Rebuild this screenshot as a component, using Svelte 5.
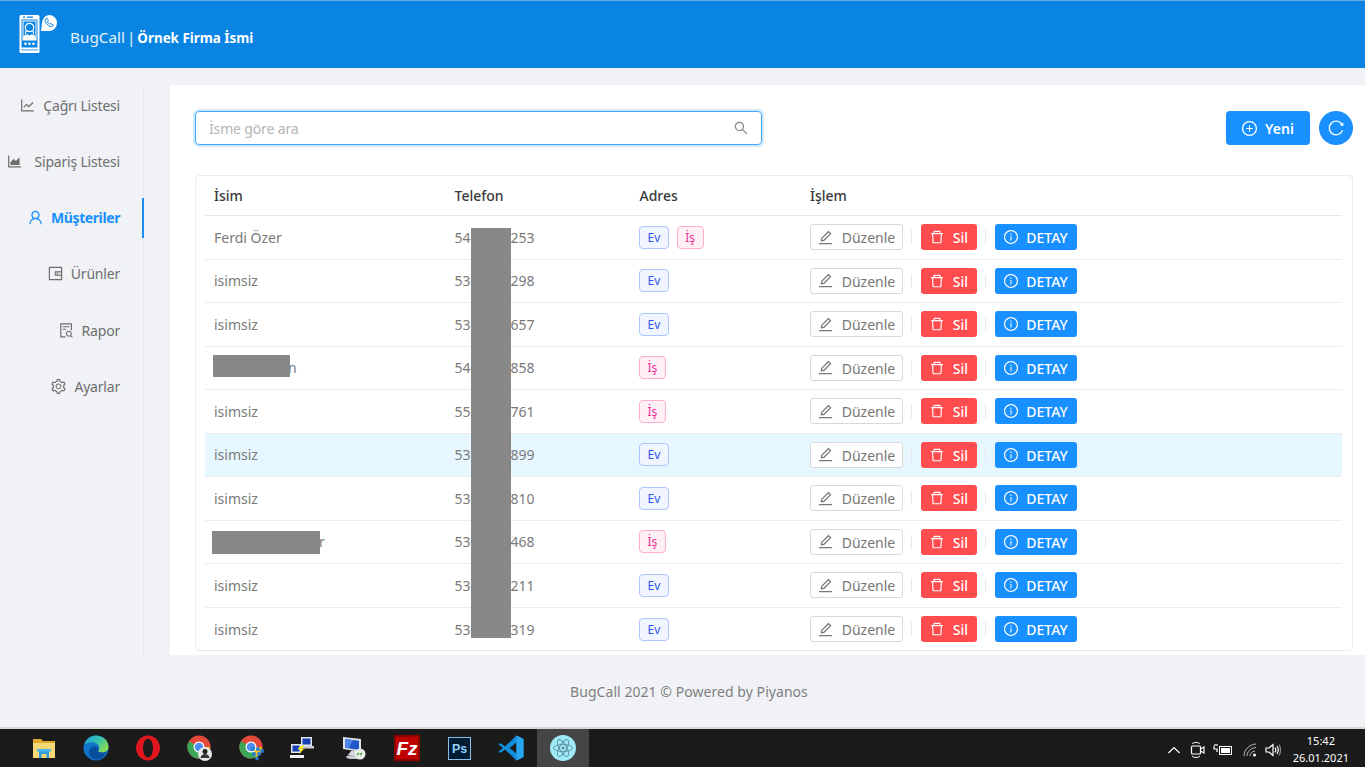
<script>
  const icons = {
    lineChart: "M888 792H200V168c0-4.4-3.6-8-8-8h-56c-4.4 0-8 3.6-8 8v688c0 4.4 3.6 8 8 8h752c4.4 0 8-3.6 8-8v-56c0-4.4-3.6-8-8-8zM305.8 637.7c3.1 3.1 8.1 3.1 11.3 0l138.3-137.6L583 628.5c3.1 3.1 8.2 3.1 11.3 0l275.4-275.3c3.1-3.1 3.1-8.2 0-11.3l-39.6-39.6a8.03 8.03 0 00-11.3 0l-230 229.9L461.4 404a8.03 8.03 0 00-11.3 0L266.3 586.7a8.03 8.03 0 000 11.3l39.5 39.7z",
    areaChart: "M888 792H200V168c0-4.4-3.6-8-8-8h-56c-4.4 0-8 3.6-8 8v688c0 4.4 3.6 8 8 8h752c4.4 0 8-3.6 8-8v-56c0-4.4-3.6-8-8-8zm-616-64h536c4.4 0 8-3.6 8-8V284c0-7.2-8.7-10.7-13.8-5.7L592 488.6l-125.4-124a8.03 8.03 0 00-11.3 0l-189 189.6a7.87 7.87 0 00-2.3 5.6V720c0 4.4 3.6 8 8 8z",
    user: "M858.5 763.6a374 374 0 00-80.6-119.5 375.63 375.63 0 00-119.5-80.6c-.4-.2-.8-.3-1.2-.5C719.5 518 760 444.7 760 362c0-137-111-248-248-248S264 225 264 362c0 82.7 40.5 156 102.8 201.1-.4.2-.8.3-1.2.5-44.8 18.9-85 46-119.5 80.6a375.63 375.63 0 00-80.6 119.5A371.7 371.7 0 00136 901.8a8 8 0 008 8.2h60c4.4 0 7.9-3.5 8-7.8 2-77.2 33-149.5 87.8-204.3 56.7-56.7 132-87.9 212.2-87.9s155.5 31.2 212.2 87.9C779 752.7 810 825 812 902.2c.1 4.4 3.6 7.8 8 7.8h60a8 8 0 008-8.2c-1-47.8-10.9-94.3-29.5-138.2zM512 534c-45.9 0-89.1-17.9-121.6-50.4S340 407.9 340 362c0-45.9 17.9-89.1 50.4-121.6S466.1 190 512 190s89.1 17.9 121.6 50.4S684 316.1 684 362c0 45.9-17.9 89.1-50.4 121.6S557.9 534 512 534z",
    wallet: "M880 112H144c-17.7 0-32 14.3-32 32v736c0 17.7 14.3 32 32 32h736c17.7 0 32-14.3 32-32V144c0-17.7-14.3-32-32-32zm-40 464H528V448h312v128zm0 264H184V184h656v200H496c-17.7 0-32 14.3-32 32v192c0 17.7 14.3 32 32 32h344v200zM580 512a40 40 0 1080 0 40 40 0 10-80 0z",
    fileSearch: "M688 312v-48c0-4.4-3.6-8-8-8H296c-4.4 0-8 3.6-8 8v48c0 4.4 3.6 8 8 8h384c4.4 0 8-3.6 8-8zm-392 88c-4.4 0-8 3.6-8 8v48c0 4.4 3.6 8 8 8h184c4.4 0 8-3.6 8-8v-48c0-4.4-3.6-8-8-8H296zm144 452H208V148h560v344c0 4.4 3.6 8 8 8h56c4.4 0 8-3.6 8-8V108c0-17.7-14.3-32-32-32H168c-17.7 0-32 14.3-32 32v784c0 17.7 14.3 32 32 32h272c4.4 0 8-3.6 8-8v-56c0-4.4-3.6-8-8-8zm445.7 51.5l-93.3-93.3C814.7 780.7 828 743.9 828 704c0-97.2-78.8-176-176-176s-176 78.8-176 176 78.8 176 176 176c35.8 0 69-10.7 96.8-29l94.7 94.7c1.6 1.6 3.6 2.3 5.6 2.3s4.1-.8 5.6-2.3l31-31a7.9 7.9 0 000-11.2zM652 816c-61.9 0-112-50.1-112-112s50.1-112 112-112 112 50.1 112 112-50.1 112-112 112z",
    setting: "M924.8 625.7l-65.5-56c3.1-19 4.7-38.4 4.7-57.8s-1.6-38.8-4.7-57.8l65.5-56a32.03 32.03 0 009.3-35.2l-.9-2.6a443.74 443.74 0 00-79.7-137.9l-1.8-2.1a32.12 32.12 0 00-35.1-9.5l-81.3 28.9c-30-24.6-63.5-44-99.7-57.6l-15.7-85a32.05 32.05 0 00-25.8-25.7l-2.7-.5c-52.1-9.4-106.9-9.4-159 0l-2.7.5a32.05 32.05 0 00-25.8 25.7l-15.8 85.4a351.86 351.86 0 00-99 57.4l-81.9-29.1a32 32 0 00-35.1 9.5l-1.8 2.1a446.02 446.02 0 00-79.7 137.9l-.9 2.6c-4.5 12.5-.8 26.5 9.3 35.2l66.3 56.6c-3.1 18.8-4.6 38-4.6 57.1 0 19.2 1.5 38.4 4.6 57.1L99 625.5a32.03 32.03 0 00-9.3 35.2l.9 2.6c18.1 50.4 44.9 96.9 79.7 137.9l1.8 2.1a32.12 32.12 0 0035.1 9.5l81.9-29.1c29.8 24.5 63.1 43.9 99 57.4l15.8 85.4a32.05 32.05 0 0025.8 25.7l2.7.5a449.4 449.4 0 00159 0l2.7-.5a32.05 32.05 0 0025.8-25.7l15.7-85a350 350 0 0099.7-57.6l81.3 28.9a32 32 0 0035.1-9.5l1.8-2.1c34.8-41.1 61.6-87.5 79.7-137.9l.9-2.6c4.5-12.3.8-26.3-9.3-35zM788.3 465.9c2.5 15.1 3.8 30.6 3.8 46.1s-1.3 31-3.8 46.1l-6.6 40.1 74.7 63.9a370.03 370.03 0 01-42.6 73.6L721 702.8l-31.4 25.8c-23.9 19.6-50.5 35-79.3 45.8l-38.1 14.3-17.9 97a377.5 377.5 0 01-85 0l-17.9-97.2-37.8-14.5c-28.5-10.8-55-26.2-78.7-45.7l-31.4-25.9-93.4 33.2c-17-22.9-31.2-47.6-42.6-73.6l75.5-64.5-6.5-40c-2.4-14.9-3.7-30.3-3.7-45.5 0-15.3 1.2-30.6 3.7-45.5l6.5-40-75.5-64.5c11.3-26.1 25.6-50.7 42.6-73.6l93.4 33.2 31.4-25.9c23.7-19.5 50.2-34.9 78.7-45.7l37.9-14.3 17.9-97.2c28.1-3.2 56.8-3.2 85 0l17.9 97 38.1 14.3c28.7 10.8 55.4 26.2 79.3 45.8l31.4 25.8 92.8-32.9c17 22.9 31.2 47.6 42.6 73.6L781.8 426l6.5 39.9zM512 326c-97.2 0-176 78.8-176 176s78.8 176 176 176 176-78.8 176-176-78.8-176-176-176zm79.2 255.2A111.6 111.6 0 01512 614c-29.9 0-58-11.7-79.2-32.8A111.6 111.6 0 01400 502c0-29.9 11.7-58 32.8-79.2C454 401.6 482.1 390 512 390c29.9 0 58 11.6 79.2 32.8A111.6 111.6 0 01624 502c0 29.9-11.7 58-32.8 79.2z",
    edit: "M257.7 752c2 0 4-.2 6-.5L431.9 722c2-.4 3.9-1.3 5.3-2.8l423.9-423.9a9.96 9.96 0 000-14.1L694.9 114.9c-1.9-1.9-4.4-2.9-7.1-2.9s-5.2 1-7.1 2.9L256.8 538.8c-1.5 1.5-2.4 3.3-2.8 5.3l-29.5 168.2a33.5 33.5 0 009.4 29.8c6.6 6.4 14.9 9.9 23.8 9.9zm67.4-174.4L687.8 215l73.3 73.3-362.7 362.6-88.9 15.7 15.6-89zM880 836H144c-17.7 0-32 14.3-32 32v36c0 4.4 3.6 8 8 8h784c4.4 0 8-3.6 8-8v-36c0-17.7-14.3-32-32-32z",
    trash: "M360 184h-8c4.4 0 8-3.6 8-8v8h304v-8c0 4.4 3.6 8 8 8h-8v72h72v-80c0-35.3-28.7-64-64-64H352c-35.3 0-64 28.7-64 64v80h72v-72zm504 72H160c-17.7 0-32 14.3-32 32v32c0 4.4 3.6 8 8 8h60.4l24.7 523c1.6 34.1 29.8 61 63.9 61h454c34.2 0 62.3-26.8 63.9-61l24.7-523H888c4.4 0 8-3.6 8-8v-32c0-17.7-14.3-32-32-32zM731.3 840H292.7l-24.2-512h487l-24.2 512z",
    info: "M512 64C264.6 64 64 264.6 64 512s200.6 448 448 448 448-200.6 448-448S759.4 64 512 64zm0 820c-205.4 0-372-166.6-372-372s166.6-372 372-372 372 166.6 372 372-166.6 372-372 372zM464 336a48 48 0 1096 0 48 48 0 10-96 0zm72 112h-48c-4.4 0-8 3.6-8 8v272c0 4.4 3.6 8 8 8h48c4.4 0 8-3.6 8-8V456c0-4.4-3.6-8-8-8z",
    plus: "M696 480H544V328c0-4.4-3.6-8-8-8h-48c-4.4 0-8 3.6-8 8v152H328c-4.4 0-8 3.6-8 8v48c0 4.4 3.6 8 8 8h152v152c0 4.4 3.6 8 8 8h48c4.4 0 8-3.6 8-8V544h152c4.4 0 8-3.6 8-8v-48c0-4.4-3.6-8-8-8zM512 64C264.6 64 64 264.6 64 512s200.6 448 448 448 448-200.6 448-448S759.4 64 512 64zm0 820c-205.4 0-372-166.6-372-372s166.6-372 372-372 372 166.6 372 372-166.6 372-372 372z",
    reload: "M909.1 209.3l-56.4 44.1C775.8 155.1 656.2 92 521.9 92 290 92 102.3 279.5 102 511.5 101.7 743.7 289.8 932 521.9 932c181.3 0 335.8-115 394.6-276.1 1.5-4.2-.7-8.9-4.9-10.3l-56.7-19.5a8 8 0 00-10.1 4.8c-1.8 5-3.8 10-5.9 14.9-17.3 41-42.1 77.8-73.7 109.4A344.77 344.77 0 01655.9 829c-42.3 17.9-87.4 27-133.8 27-46.5 0-91.5-9.1-133.8-27A341.5 341.5 0 01279 755.2a342.16 342.16 0 01-73.7-109.4c-17.9-42.4-27-87.4-27-133.9s9.1-91.5 27-133.9c17.3-41 42.1-77.8 73.7-109.4 31.6-31.6 68.4-56.4 109.3-73.8 42.3-17.9 87.4-27 133.8-27 46.5 0 91.5 9.1 133.8 27a341.5 341.5 0 01109.3 73.8c9.9 9.9 19.2 20.4 27.8 31.4l-60.2 47a8 8 0 003 14.1l175.6 43c5 1.2 9.9-2.6 9.9-7.7l.8-180.9c-.1-6.6-7.8-10.3-13-6.2z",
    search: "M909.6 854.5L649.9 594.8C690.2 542.7 712 479 712 412c0-80.2-31.3-155.4-87.9-212.1-56.6-56.7-132-87.9-212.1-87.9s-155.5 31.3-212.1 87.9C143.2 256.5 112 331.8 112 412c0 80.1 31.3 155.5 87.9 212.1C256.5 680.8 331.8 712 412 712c67 0 130.6-21.9 182.7-62l259.7 259.6a8.2 8.2 0 0011.6 0l43.6-43.5a8.2 8.2 0 000-11.6zM570.4 570.4C528 612.7 471.8 636 412 636s-116-23.3-158.4-65.6C211.3 528 188 471.8 188 412s23.3-116 65.6-158.4C296 211.3 352.2 188 412 188s116 23.3 158.4 65.6S636 352.2 636 412s-23.3 116-65.6 158.4z"
  };

  const menu = [
    { label: "Çağrı Listesi", icon: "lineChart" },
    { label: "Sipariş Listesi", icon: "areaChart", wide: true },
    { label: "Müşteriler", icon: "user", active: true },
    { label: "Ürünler", icon: "wallet" },
    { label: "Rapor", icon: "fileSearch" },
    { label: "Ayarlar", icon: "setting" }
  ];

  // pad: room taken by a name that is blacked out in the screenshot, only its last letter shows
  const rows = [
    { name: "Ferdi Özer", phone: "5400000253", tags: ["Ev", "İş"] },
    { name: "isimsiz", phone: "5300000298", tags: ["Ev"] },
    { name: "isimsiz", phone: "5300000657", tags: ["Ev"] },
    { name: "n", pad: 74, phone: "5400000858", tags: ["İş"] },
    { name: "isimsiz", phone: "5500000761", tags: ["İş"] },
    { name: "isimsiz", phone: "5300000899", tags: ["Ev"], hover: true },
    { name: "isimsiz", phone: "5300000810", tags: ["Ev"] },
    { name: "r", pad: 105, phone: "5300000468", tags: ["İş"] },
    { name: "isimsiz", phone: "5300000211", tags: ["Ev"] },
    { name: "isimsiz", phone: "5300000319", tags: ["Ev"] }
  ];
</script>

{#snippet icon(name)}
  <svg class="icon" viewBox="64 64 896 896" fill="currentColor" aria-hidden="true"><path d={icons[name]} /></svg>
{/snippet}

{#snippet chromeBase()}
  <circle cx="12" cy="12" r="11.500" fill="#e5493a" />
  <path d="M12 12 L2 18 A11.500 11.500 0 0 1 2 6.200z" fill="#3aa757" />
  <path d="M12 12 L2 18 A11.500 11.500 0 0 0 20 20z" fill="#3aa757" />
  <path d="M12 12 L23 12 A11.500 11.500 0 0 1 17 22z" fill="#f5c518" />
  <circle cx="12" cy="12" r="5.500" fill="#fff" />
  <circle cx="12" cy="12" r="4.300" fill="#4d8ef0" />
{/snippet}

<div class="page">
  <header class="topbar">
    <svg class="logo" viewBox="0 0 40 40" fill="none" aria-hidden="true">
      <rect x="1.500" y="1" width="20" height="38" rx="1.500" fill="#fff" />
      <rect x="3.500" y="5.500" width="16" height="28" fill="#0984e3" />
      <rect x="5" y="2.500" width="2" height="1.300" fill="#0984e3" />
      <rect x="9" y="2.500" width="6" height="1.300" fill="#0984e3" />
      <rect x="5" y="7" width="13" height="19" fill="none" stroke="#fff" />
      <circle cx="11.500" cy="13.500" r="4.200" fill="none" stroke="#fff" stroke-width="1.200" />
      <path d="M7.500 20c-.3-2 .2-3 .9-3.500M15.500 20c.3-2-.2-3-.9-3.500" stroke="#fff" stroke-width="1.200" />
      <path d="M5 26v-2c0-2.500 2.500-3.500 4.500-3.800l2 1.300 2-1.300c2 .3 4.500 1.300 4.500 3.800v2z" fill="#fff" />
      <circle cx="7.500" cy="29.800" r="1.300" fill="#fff" />
      <circle cx="11.500" cy="29.800" r="1.300" fill="#fff" />
      <circle cx="15.500" cy="29.800" r="1.300" fill="#fff" />
      <rect x="3" y="35.500" width="17" height=".8" fill="#0984e3" />
      <path d="M31 1a8 8 0 1 1 0 16h-8l1-8a8 8 0 0 1 7-8z" fill="#fff" />
      <path d="M27.500 5c-1.300 1 .2 4 1.700 5.500 1.500 1.500 4.200 3 5.400 1.700l.5-1.300-2.400-1.500-1 .8c-1-.5-1.900-1.500-2.300-2.600l1-1-1.500-2.500z" fill="none" stroke="#0984e3" />
    </svg>
    <div class="brand">BugCall | <strong>Örnek Firma İsmi</strong></div>
  </header>

  <div class="body">
    <nav class="sidebar">
      {#each menu as item}
        <div class="menu-item" class:active={item.active} class:wide={item.wide}>
          {@render icon(item.icon)}
          <span>{item.label}</span>
        </div>
      {/each}
    </nav>

    <main class="content">
      <div class="toolbar">
        <div class="search">
          <span class="placeholder">İsme göre ara</span>
          {@render icon("search")}
        </div>
        <div class="toolbar-actions">
          <button class="btn-new">{@render icon("plus")}<span>Yeni</span></button>
          <button class="btn-reload" aria-label="Yenile">{@render icon("reload")}</button>
        </div>
      </div>

      <div class="card">
        <div class="row head">
          <div>İsim</div>
          <div>Telefon</div>
          <div>Adres</div>
          <div>İşlem</div>
        </div>
        {#each rows as row}
          <div class="row" class:hover={row.hover}>
            <div class="name" style:padding-left={row.pad ? `${row.pad}px` : null}>{row.name}</div>
            <div class="phone">{row.phone}</div>
            <div class="tags">
              {#each row.tags as tag}
                <span class="tag" class:ev={tag === "Ev"} class:is={tag === "İş"}>{tag}</span>
              {/each}
            </div>
            <div class="actions">
              <button class="btn btn-edit">{@render icon("edit")}<span>Düzenle</span></button>
              <i class="sep"></i>
              <button class="btn btn-del">{@render icon("trash")}<span>Sil</span></button>
              <i class="sep"></i>
              <button class="btn btn-info">{@render icon("info")}<span>DETAY</span></button>
            </div>
          </div>
        {/each}
      </div>

      <!-- redaction blocks painted over the table -->
      <div class="mask mask-phone"></div>
      <div class="mask mask-name1"></div>
      <div class="mask mask-name2"></div>
    </main>
  </div>

  <footer class="footer">BugCall 2021 © Powered by Piyanos</footer>

  <div class="taskbar">
    <div class="apps">
      <div class="app">
        <svg viewBox="0 0 26 26"><path d="M2 4h8l2 2h12v4H2z" fill="#e0a92e" /><path d="M2 8h22v15H2z" fill="#f7d774" /><path d="M8 15h10v8h-2.500v-4h-5v4H8z" fill="#2f9be0" /><path d="M6 14h14v2.500H6z" fill="#4db5ee" /></svg>
      </div>
      <div class="app">
        <svg viewBox="0 0 26 26">
          <defs>
            <linearGradient id="edge-top" x1="0" y1="0" x2="1" y2=".6">
              <stop offset="0" stop-color="#1b9ed8" />
              <stop offset=".55" stop-color="#37c2b0" />
              <stop offset="1" stop-color="#86dc55" />
            </linearGradient>
          </defs>
          <circle cx="13" cy="13" r="12.500" fill="#0f76cc" />
          <path d="M1 10.500C2.500 4.500 7.500.5 13 .5c7 0 12.500 5 12.500 11.500 0 3.500-3 5.500-6 5.500-2.500 0-4.500-.8-4.500-1.800 2-1.700 1.500-5-.5-6.500-4-3-10.500-2.500-13.500 1.300z" fill="url(#edge-top)" />
          <path d="M15 15.700c0 1 2 1.800 4.500 1.800 1.500 0 3-.5 4.200-1.500-1.500 5-6 9-11 8.500-5-.5-7.500-5-6.500-9 1-3.500 5-5.500 8-3.500 1.500 1 2 2.500.8 3.700z" fill="#0a4f9c" />
        </svg>
      </div>
      <div class="app">
        <svg viewBox="0 0 26 26"><ellipse cx="13" cy="13" rx="12" ry="12.500" fill="#e0161f" /><ellipse cx="13" cy="13" rx="5" ry="9.500" fill="#1c1c1c" /></svg>
      </div>
      <div class="app">
        <svg viewBox="0 0 26 26">{@render chromeBase()}<circle cx="18" cy="19" r="7" fill="#e8e8e8" /><circle cx="18" cy="16.500" r="2.500" fill="#222" /><path d="M13.500 23c.5-3 2.500-4 4.500-4s4 1 4.500 4z" fill="#333" /></svg>
      </div>
      <div class="app">
        <svg viewBox="0 0 26 26">{@render chromeBase()}<g fill="#2f7fd6"><circle cx="14" cy="14" r="2" /><circle cx="19" cy="14" r="2" /><circle cx="23" cy="16" r="2" /><circle cx="15" cy="19" r="2" /><circle cx="20" cy="19" r="2" /><circle cx="18" cy="23.500" r="1.800" /></g></svg>
      </div>
      <div class="app">
        <svg viewBox="0 0 26 26"><rect x="11" y="2" width="11" height="9" fill="#dfe6ef" /><rect x="12.500" y="3.500" width="8" height="6" fill="#1b3fb5" /><rect x="9" y="11" width="15" height="2.500" fill="#c9ced6" /><rect x="1" y="9" width="10" height="9" fill="#dfe6ef" /><rect x="2.500" y="10.500" width="7" height="6" fill="#1b3fb5" /><rect x="0" y="20" width="14" height="3" fill="#eef0f3" /><path d="M9 12l5-2-2 4 3-1-6 6 2-5-3 1z" fill="#f8e71c" /></svg>
      </div>
      <div class="app">
        <svg viewBox="0 0 26 26"><path d="M1 2l18 2v13l-18-3z" fill="#dfe4ea" /><path d="M3 4l14 1.700v9.300l-14-2.200z" fill="#1f56c7" /><path d="M3 4l8 1-4 8-4-.5z" fill="#4f86e8" /><path d="M9 16h8v4H6z" fill="#d4d8dd" /><ellipse cx="11" cy="22" rx="7" ry="2" fill="#c7ccd2" /><circle cx="18" cy="19" r="5.500" fill="#e9efe6" /><path d="M15 20l2-2M18 20l2-2" stroke="#3b9b3b" stroke-width="1.300" /></svg>
      </div>
      <div class="app">
        <svg viewBox="0 0 26 26"><rect width="26" height="26" fill="#8f0000" /><rect x="2" y="2" width="22" height="22" fill="#bf0000" /><text x="13" y="20" text-anchor="middle" font-family="Liberation Sans, sans-serif" font-size="19" font-weight="700" font-style="italic" fill="#fff">Fz</text></svg>
      </div>
      <div class="app small">
        <svg viewBox="0 0 24 24"><rect x=".5" y=".5" width="23" height="23" fill="#001d34" stroke="#8ec5f0" /><text x="12" y="17" text-anchor="middle" font-family="Liberation Sans, sans-serif" font-size="13" font-weight="700" fill="#8fd0ff">Ps</text></svg>
      </div>
      <div class="app">
        <svg viewBox="0 0 26 26"><path d="M18.500 0.500L25.500 4v18l-7 3.500L7 14.500 2.500 18 .5 16.500 5 13 .5 9.500 2.500 8 7 11.500z" fill="#0f8fdc" /><path d="M18.500 7.500L11.500 13l7 5.500z" fill="#1c1c1c" /><path d="M18.500 .5L25.500 4v18l-7 3.500z" fill="#2aa6ee" /></svg>
      </div>
      <div class="app current">
        <svg viewBox="0 0 26 26"><circle cx="13" cy="13" r="13" fill="#9feaf9" /><g fill="none" stroke="#5d8f9c" stroke-width=".9"><ellipse cx="13" cy="13" rx="9.500" ry="3.600" /><ellipse cx="13" cy="13" rx="9.500" ry="3.600" transform="rotate(60 13 13)" /><ellipse cx="13" cy="13" rx="9.500" ry="3.600" transform="rotate(120 13 13)" /></g><circle cx="13" cy="13" r="1.500" fill="#5d8f9c" /></svg>
      </div>
    </div>

    <div class="tray">
      <svg width="14" height="14" viewBox="0 0 14 14" fill="none" stroke="#fff" stroke-width="1.200"><path d="M1.500 10L7 4.500 12.500 10" /></svg>
      <svg class="tray-cam" width="16" height="22" viewBox="0 0 16 22" fill="none" stroke="#fff" stroke-width="1.200"><path d="M2 5c1-2 7-2 8 0M2 17c1 2 7 2 8 0" stroke-width="1" /><rect x="1.500" y="7" width="9" height="8" rx="1" /><path d="M10.500 10l3.500-2v6l-3.500-2" /></svg>
      <svg class="tray-bat" width="19" height="14" viewBox="0 0 19 14"><rect x="6.500" y="3.500" width="12" height="8" fill="none" stroke="#fff" /><rect x="8" y="5" width="9" height="5" fill="#fff" /><path d="M1 3v3h3v3M2 1v2M4 1v2" fill="none" stroke="#fff" stroke-width="1.200" /></svg>
      <svg class="tray-wifi" width="16" height="16" viewBox="0 0 16 16" fill="none" stroke="#bbb"><path d="M2 14C2 8 7 2.500 14 2M5 14c0-4 3.500-8 9-8.500M8 14c0-2.500 2-4.500 5-5" /><circle cx="12.500" cy="13" r="1.500" fill="#fff" stroke="none" /></svg>
      <svg class="tray-vol" width="16" height="16" viewBox="0 0 16 16" fill="none" stroke="#fff" stroke-width="1.200"><path d="M1 6h3l4-3.500v11L4 10H1z" /><path d="M10 5.500c1 1.500 1 3.500 0 5M12 4c1.500 2.300 1.500 5.700 0 8" /><path d="M14 2.500c2 3 2 8 0 11" stroke="#888" /></svg>
      <div class="clock"><span>15:42</span><span>26.01.2021</span></div>
    </div>
  </div>
</div>

<style>
  :global(body) {
    margin: 0;
    background: #f0f2f5;
    font-family: "Noto Sans", "Open Sans", sans-serif;
    font-size: 14px;
    overflow: hidden;
  }

  .page {
    height: 767px;
    display: flex;
    flex-direction: column;
    background: #f0f2f5;
  }

  .icon {
    width: 14px;
    height: 14px;
    flex: none;
  }

  /* header */
  .topbar {
    height: 67px;
    flex: none;
    display: flex;
    align-items: center;
    gap: 12px;
    padding-left: 18px;
    background: #0984e3;
    border-top: 1px solid #62aeea;
    color: #fff;
  }

  .logo {
    width: 40px;
    height: 40px;
    margin-bottom: 2px;
  }

  .brand {
    font-size: 15.300px;
    padding-top: 5px;
    color: #e3f1fc;
    word-spacing: -2px;
  }

  .brand strong {
    font-size: 13.400px;
    font-weight: 700;
    color: #fff;
    word-spacing: 0;
  }

  /* sidebar + content */
  .body {
    display: flex;
    height: 570px;
    margin-top: 17px;
    flex: none;
  }

  .sidebar {
    width: 143px;
    flex: none;
    border-right: 1px solid #e6e8eb;
    display: flex;
    flex-direction: column;
    gap: 16.300px;
    margin-right: 26px;
  }

  .menu-item {
    height: 40px;
    display: flex;
    align-items: center;
    justify-content: flex-end;
    gap: 8px;
    padding-right: 23px;
    color: #6e6e6e;
    letter-spacing: -0.2px;
    position: relative;
  }

  .menu-item.wide {
    gap: 13px;
  }

  .menu-item .icon {
    width: 15px;
    height: 15px;
  }

  .menu-item.active {
    color: #1890ff;
    font-weight: 700;
    letter-spacing: -0.4px;
  }

  .menu-item.active::after {
    content: "";
    position: absolute;
    right: -1px;
    top: 0;
    bottom: 0;
    width: 2px;
    background: #1890ff;
  }

  .content {
    flex: 1;
    min-width: 0;
    background: #fff;
    padding: 26px 12px 0 25px;
    position: relative;
  }

  .toolbar {
    display: flex;
    justify-content: space-between;
    height: 34px;
    margin-bottom: 30px;
  }

  .search {
    width: 567px;
    box-sizing: border-box;
    display: flex;
    align-items: center;
    justify-content: space-between;
    padding: 0 13px;
    border: 1px solid #40a9ff;
    border-radius: 4px;
    box-shadow: 0 0 0 2px rgba(24, 144, 255, 0.2);
    color: #8c8c8c;
  }

  .placeholder {
    color: #b5b5b5;
    letter-spacing: -0.15px;
    padding-top: 1px;
  }

  .toolbar-actions {
    display: flex;
    gap: 9px;
  }

  button {
    font: inherit;
    cursor: pointer;
    padding: 0;
  }

  button span {
    padding-top: 1px;
  }

  .btn-new {
    width: 84px;
    height: 34px;
    display: flex;
    align-items: center;
    justify-content: center;
    gap: 8px;
    border: none;
    border-radius: 4px;
    background: #1890ff;
    color: #fff;
    font-weight: 600;
  }

  .btn-new .icon {
    width: 15px;
    height: 15px;
  }

  .btn-reload {
    width: 34px;
    height: 34px;
    display: flex;
    align-items: center;
    justify-content: center;
    border: none;
    border-radius: 50%;
    background: #1890ff;
    color: #fff;
  }

  .btn-reload .icon {
    width: 16px;
    height: 16px;
  }

  /* table */
  .card {
    box-sizing: border-box;
    height: 476px;
    padding: 0 10px 0 9px;
    border: 1px solid #ebebeb;
    border-radius: 4px;
  }

  .row {
    display: grid;
    grid-template-columns: 240.500px 185px 170.500px 1fr;
    align-items: center;
    height: 43.500px;
    box-sizing: border-box;
    padding-left: 9px;
    border-bottom: 1px solid #ececec;
    color: #7a7a7a;
  }

  .row:last-child {
    border-bottom: none;
  }

  .row.head {
    height: 40px;
    color: #3a3a3a;
    font-weight: 500;
    border-bottom: 1px solid #e6e6e6;
  }

  .row.hover {
    background: #e6f7ff;
  }

  .tags {
    display: flex;
    gap: 8px;
    margin-left: -0.500px;
  }

  .tag {
    box-sizing: border-box;
    height: 23px;
    line-height: 21px;
    padding: 0 7.500px;
    border: 1px solid;
    border-radius: 4px;
    font-size: 12px;
  }

  .tag.ev {
    color: #2f54eb;
    background: #f0f5ff;
    border-color: #adc6ff;
  }

  .tag.is {
    color: #eb2f96;
    background: #fff0f6;
    border-color: #ffadd2;
  }

  .actions {
    display: flex;
    align-items: center;
  }

  .sep {
    width: 1px;
    height: 14px;
    margin: 0 9px 0 8px;
    background: #e8e8e8;
  }

  .btn {
    height: 26px;
    box-sizing: border-box;
    display: flex;
    align-items: center;
    justify-content: center;
    border-radius: 3px;
    border: 1px solid transparent;
  }

  .btn-edit {
    width: 93px;
    gap: 9px;
    background: #fff;
    border-color: #d9d9d9;
    color: #777;
  }

  .btn-edit .icon {
    width: 15px;
    height: 15px;
  }

  .btn-del {
    width: 56px;
    gap: 9px;
    background: #ff4d4f;
    color: #fff;
    font-weight: 500;
  }

  .btn-info {
    width: 82px;
    gap: 8px;
    background: #1890ff;
    color: #fff;
    font-weight: 500;
  }

  .mask {
    position: absolute;
    background: #888;
  }

  .mask-phone {
    left: 301px;
    top: 143px;
    width: 40px;
    height: 410px;
  }

  .mask-name1 {
    left: 43px;
    top: 270px;
    width: 77px;
    height: 22px;
  }

  .mask-name2 {
    left: 42px;
    top: 446px;
    width: 108px;
    height: 23px;
  }

  .footer {
    flex: 1;
    display: flex;
    align-items: center;
    justify-content: center;
    padding-left: 13px;
    color: #7f7f7f;
    letter-spacing: 0.05px;
  }

  /* windows taskbar */
  .taskbar {
    height: 38px;
    flex: none;
    display: flex;
    justify-content: space-between;
    background: #1b1b1b;
    border-top: 2px solid #d8d8d8;
    color: #fff;
  }

  .apps {
    display: flex;
    padding-left: 18px;
  }

  .app {
    width: 51.900px;
    display: flex;
    align-items: center;
    justify-content: center;
  }

  .app svg {
    width: 26px;
    height: 26px;
  }

  .app.small svg {
    width: 23px;
    height: 23px;
  }

  .app.current {
    background: #454545;
  }

  .tray {
    display: flex;
    align-items: center;
    padding-right: 16px;
    padding-top: 4px;
  }

  .tray-cam {
    margin-left: 9px;
  }

  .tray-bat {
    margin-left: 7px;
  }

  .tray-wifi {
    margin-left: 10px;
  }

  .tray-vol {
    margin-left: 7px;
  }

  .clock {
    display: flex;
    flex-direction: column;
    align-items: center;
    margin-left: 12px;
    font-size: 11px;
    line-height: 17px;
    margin-top: -2px;
  }
</style>
